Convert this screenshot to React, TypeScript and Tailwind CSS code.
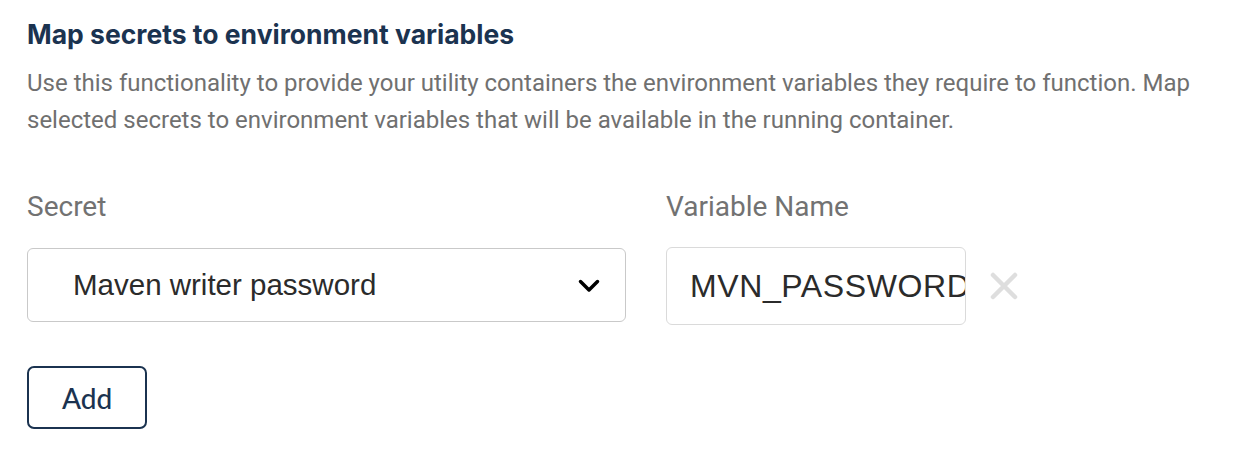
export default function App() {
  return (
    <div className="min-h-[456px] w-[1258px] bg-white px-[27px] pt-[18px] font-['Roboto',sans-serif]">
      <h2 className="font-['Inter',sans-serif] text-[26.5px] font-bold leading-[32px] text-[#1b3350]">Map secrets to environment variables</h2>
      <p className="mt-[15px] max-w-[1190px] text-[24px] leading-[37px] text-[#707070]">
        Use this functionality to provide your utility containers the environment variables they require to function. Map
        selected secrets to environment variables that will be available in the running container.
      </p>

      <div className="mt-[52px] flex items-start gap-[40px]">
        <div className="w-[599px]">
          <label className="block text-[28px] leading-[32px] text-[#727272]">Secret</label>
          <div className="mt-[25px] flex h-[74px] items-center justify-between rounded-[6px] border border-[#c9c9c9] pl-[45px] pr-[25px]">
            <span className="font-['Liberation_Sans',sans-serif] text-[29.5px] text-[#2b2b2b]">Maven writer password</span>
            <svg width="22" height="14" viewBox="0 0 22 14" fill="none" className="mt-[2px]">
              <path d="M2.5 2.5 11 11 19.5 2.5" stroke="#000" strokeWidth="3.5" strokeLinecap="round" strokeLinejoin="round" />
            </svg>
          </div>
        </div>
        <div>
          <label className="block text-[28px] leading-[32px] text-[#727272]">Variable Name</label>
          <div className="mt-[24px] flex items-center gap-[24px]">
            <div className="flex h-[78px] w-[300px] items-center overflow-hidden rounded-[6px] border border-[#dadada] pl-[23px]">
              <span className="whitespace-nowrap font-['Liberation_Sans',sans-serif] text-[32px] tracking-[0.6px] text-[#2b2b2b]">MVN_PASSWORD</span>
            </div>
            <svg width="28" height="28" viewBox="0 0 28 28" fill="none">
              <path d="M3 3 25 25M25 3 3 25" stroke="#dedede" strokeWidth="4.5" strokeLinecap="round" />
            </svg>
          </div>
        </div>
      </div>

      <button className="mt-[41px] flex h-[63px] w-[120px] items-center justify-center rounded-[7px] border-2 border-[#1b3350] font-['Lato',sans-serif] text-[28px] font-medium text-[#1b3350]">
        Add
      </button>
    </div>
  );
}
